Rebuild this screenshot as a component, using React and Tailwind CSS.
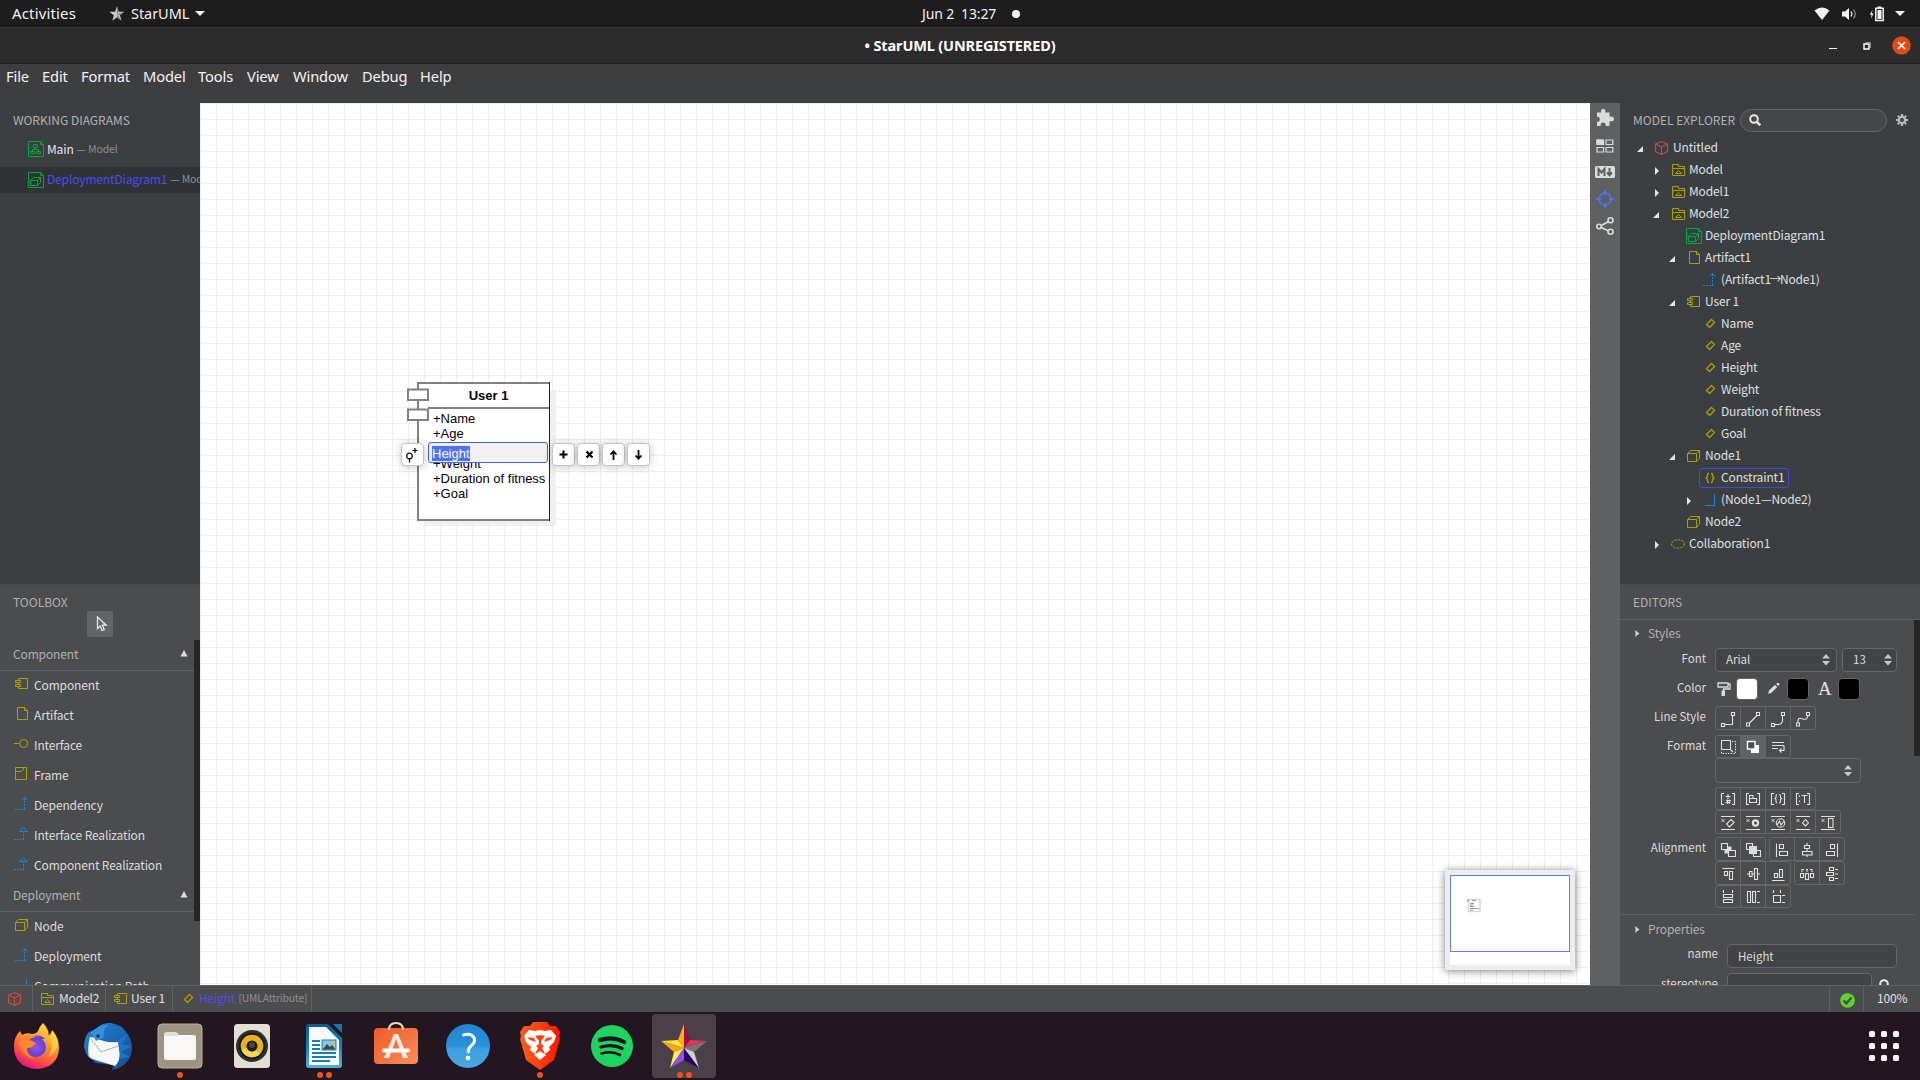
import React from "react";

const Y = "#a9a000";
const G = "#00a53c";
const B = "#1683d8";
const R = "#c94a3e";

const Svg = ({ w = 16, h = 16, children, className = "" }) => (
  <svg width={w} height={h} viewBox={`0 0 ${w} ${h}`} fill="none" className={`block shrink-0 ${className}`}>
    {children}
  </svg>
);

const glyphs = {
  project: (
    <g stroke={R} strokeWidth="1.2" strokeLinejoin="round">
      <path d="M7.5 1.5 L13.5 4 V11.5 L7.5 14.5 L1.5 11.5 V4 Z" />
      <path d="M1.5 4 L7.5 7 L13.5 4 M7.5 7 V14.5" />
    </g>
  ),
  model: (
    <g stroke={Y}>
      <path d="M2.5 6.5 V2.5 H8.5 V4.5 H14.5 V13.5 H2.5 V6.5 H14.5" />
      <path d="M5.5 11.5 L8.5 8.5 L11.5 11.5 Z" />
    </g>
  ),
  classDiagram: (
    <g stroke={G}>
      <path d="M.5 .5 H12.5 L15.5 3.5 V15.5 H.5 Z M12.5 .5 V3.5 H15.5" />
      <path d="M5.5 3.5 H9.5 V6.5 H5.5 Z M7.5 6.5 V9 M4.5 11 V8.5 H10.5 V11 M2.5 10.5 H6.5 V12.5 H2.5 Z M8.5 10.5 H12.5 V12.5 H8.5 Z" />
    </g>
  ),
  deployDiagram: (
    <g stroke={G}>
      <path d="M.5 .5 H12.5 L15.5 3.5 V15.5 H.5 Z M12.5 .5 V3.5 H15.5" />
      <path d="M2.5 8.5 H9.5 V13.5 H2.5 Z M2.5 8.5 L5.5 5.5 H12.5 V10.5 L9.5 13.5 M9.5 8.5 L12.5 5.5" />
    </g>
  ),
  artifact: (
    <g stroke={Y}>
      <path d="M3.5 1.5 H10.5 L13.5 4.5 V13.5 H3.5 Z" />
      <path d="M10.5 1.5 V4.5 H13.5" />
    </g>
  ),
  dependency: (
    <g stroke={B}>
      <path d="M1 13.5 H11.5" strokeDasharray="2 1" />
      <path d="M10.5 13 V2" strokeDasharray="2 1" />
      <path d="M7.5 4.5 L10.5 1.5 L13.5 4.5" />
    </g>
  ),
  realization: (
    <g stroke={B}>
      <path d="M0 13.5 H10.5" strokeDasharray="2 1" />
      <path d="M9.5 13 V6" strokeDasharray="2 1" />
      <path d="M5.5 5.5 L9.5 1.5 L13.5 5.5 Z" />
    </g>
  ),
  component: (
    <g stroke={Y}>
      <path d="M4.5 4.5 V2.5 H13.5 V12.5 H4.5 V10.5 M4.5 6 V9" />
      <path d="M1.5 4.5 H6.5 V6.5 H1.5 Z M1.5 8.5 H6.5 V10.5 H1.5 Z" />
    </g>
  ),
  attribute: <path d="M9.5 3.5 L12.5 6.500 L7.5 11.5 L4.5 8.500 Z" stroke={Y} strokeWidth="1.3" />,
  node: (
    <g stroke={Y}>
      <path d="M1.5 5.5 H10.5 V13.5 H1.5 Z M1.5 5.5 L4.5 2.5 H13.5 V10.5 L10.5 13.5 M10.5 5.5 L13.5 2.5" />
    </g>
  ),
  constraint: (
    <g stroke={Y} strokeWidth="1.3">
      <path d="M7 3.500 H6.5 Q5.500 3.500 5.500 4.500 V6.5 L4 8 L5.500 9.500 V11 Q5.500 12.500 6.5 12.500 H7" />
      <path d="M9 3.500 H9.500 Q10.500 3.500 10.500 4.500 V6.5 L12 8 L10.500 9.500 V11 Q10.500 12.500 9.500 12.500 H9" />
    </g>
  ),
  association: <path d="M3 13.5 H12.5 V2" stroke={B} />,
  collaboration: <ellipse cx="8" cy="8" rx="6.5" ry="4.2" stroke={Y} strokeDasharray="2.5 1" />,
  iface: (
    <g stroke={Y}>
      <path d="M0 7.5 H5.5" />
      <circle cx="9.7" cy="7.5" r="4" />
    </g>
  ),
  frame: (
    <g stroke={Y}>
      <path d="M1.5 1.5 H12.5 V13.5 H1.5 Z M1.5 5.5 H7.5 L9.5 3.5 V1.5" />
    </g>
  ),
};

const Icon = ({ name, className }) => <Svg className={className}>{glyphs[name]}</Svg>;

const Caret = ({ className = "" }) => (
  <Svg w={10} h={5} className={className}>
    <path d="M0 0 H10 L5 5 Z" fill="#f2f2f2" />
  </Svg>
);

function TopBar() {
  return (
    <header className="relative flex h-[27px] shrink-0 items-center justify-between bg-[#1d1d1d] font-['Noto_Sans',sans-serif] text-[15px] leading-none text-[#f2f2f2]">
      <div className="flex items-center pl-3">
        <span className="w-[97px] tracking-[0.15px]">Activities</span>
        <Svg w={16} h={16} className="mr-[6px]">
          <path d="M8 .5 L9.8 5.8 L15.2 5.8 L10.9 9.2 L12.6 14.8 L8 11.3 L3.4 14.8 L4.8 9.2 L.4 5.8 L6 5.8 Z" fill="#c9c9c9" />
          <path d="M8 .5 L9.8 5.8 L8 8.4 Z M15.2 5.8 L10.9 9.2 L8 8.4 Z M12.6 14.8 L8 11.3 V8.4 Z" fill="#7b7b7b" />
        </Svg>
        <span className="w-[64px] text-[14.5px] tracking-[-0.05px]">StarUML</span>
        <Caret />
      </div>
      <div className="absolute left-[922px] flex items-center whitespace-pre text-[14px]">
        <span className="w-[90px]">Jun 2  13:27</span>
        <i className="h-2 w-2 rounded-full bg-[#f2f2f2]" />
      </div>
      <div className="flex items-center pr-[15px]">
        <Svg w={17} h={14} className="mr-[11px]">
          <path d="M.5 3.5 Q8 -2.5 15.5 3.5 L8 13 Z" fill="#f2f2f2" />
        </Svg>
        <Svg w={16} h={14} className="mr-[11px]">
          <path d="M0 4.5 H3 L7 1 V13 L3 9.5 H0 Z" fill="#f2f2f2" />
          <path d="M9 4.5 Q10.8 7 9 9.5" stroke="#f2f2f2" strokeWidth="1.2" />
          <path d="M11.5 2.5 Q15 7 11.5 11.5" stroke="#8d8d8d" strokeWidth="1.2" />
        </Svg>
        <Svg w={16} h={16} className="mr-[10px]">
          <path d="M3.5 4 L.8 8.7 H2.6 L2 12.5 L4.6 7.6 H2.8 Z" fill="#f2f2f2" />
          <path d="M6.8 2.2 H14.2 V14.6 H6.8 Z" stroke="#f2f2f2" strokeWidth="1.5" />
          <path d="M8.5 .5 H12.5 V2 H8.5 Z M8.5 4 H12.5 V13 H8.5 Z" fill="#f2f2f2" />
        </Svg>
        <Caret />
      </div>
    </header>
  );
}

function TitleBar() {
  return (
    <div className="relative flex h-[37px] shrink-0 items-center justify-center border-b border-t border-b-[#202020] border-t-[#373737] bg-[#2c2c2c]">
      <span className="font-['Noto_Sans',sans-serif] text-[14.5px] font-bold leading-none text-white">• StarUML (UNREGISTERED)</span>
      <div className="absolute right-[9px] flex items-center">
        <Svg w={8} h={18} className="mr-[26px]">
          <path d="M0 11.5 H8" stroke="#fff" />
        </Svg>
        <Svg w={9} h={18} className="mr-[20px]">
          <path d="M2.5 5.5 H7.5 V11" stroke="#8e8e8e" />
          <path d="M1 7 H6 V12 H1 Z" stroke="#fff" strokeWidth="1.4" />
        </Svg>
        <Svg w={19} h={19}>
          <circle cx="9.5" cy="9.5" r="9.3" fill="#e24a1a" />
          <path d="M6 6 L13 13 M13 6 L6 13" stroke="#fff" strokeWidth="1.5" />
        </Svg>
      </div>
    </div>
  );
}

const menus = [
  ["File", "w-[36px]"], ["Edit", "w-[39px]"], ["Format", "w-[62px]"], ["Model", "w-[55px]"], ["Tools", "w-[49px]"],
  ["View", "w-[46px]"], ["Window", "w-[69px]"], ["Debug", "w-[58px]"], ["Help", "w-[40px]"],
];

function MenuBar() {
  return (
    <nav className="flex h-[39px] shrink-0 bg-linear-to-b from-[#3e3e3e] from-60% to-[#3b3f41] to-66% pl-[6px] pt-[4px] font-['Noto_Sans',sans-serif] text-[14.7px] text-[#f4f4f4]">
      {menus.map(([m, w]) => (
        <span key={m} className={`${w} h-4 leading-[16px]`}>{m}</span>
      ))}
    </nav>
  );
}

const PanelTitle = ({ children }) => (
  <h2 className="text-[12px] leading-none tracking-normal text-[#aeb0b1]">{children}</h2>
);

function WorkingDiagrams() {
  return (
    <section className="h-[481px] shrink-0 overflow-hidden bg-[#3b3f41]">
      <div className="flex h-[33px] items-center pl-[13px] pt-[1px]"><PanelTitle>WORKING DIAGRAMS</PanelTitle></div>
      <div className="flex h-[26px] items-center whitespace-nowrap pl-[28px]">
        <Icon name="classDiagram" />
        <span className="ml-[3px] text-[#e4e4e4]">Main</span>
        <span className="ml-[3px] text-[10.5px] text-[#8b8d8e]">— Model</span>
      </div>
      <div className="mt-[5px] flex h-[26px] items-center whitespace-nowrap bg-[#2f3335] pl-[28px]">
        <Icon name="deployDiagram" />
        <span className="-mt-[2px] ml-[3px] text-[#4a4df0]">DeploymentDiagram1</span>
        <span className="-mt-px ml-[3px] text-[10.5px] text-[#8b8d8e]">— Model2</span>
      </div>
    </section>
  );
}

const toolGroups = [
  ["Component", [["component", "Component"], ["artifact", "Artifact"], ["iface", "Interface"], ["frame", "Frame"], ["dependency", "Dependency"], ["realization", "Interface Realization"], ["realization", "Component Realization"]]],
  ["Deployment", [["node", "Node"], ["dependency", "Deployment"], ["association", "Communication Path"]]],
];

function Toolbox() {
  return (
    <section className="flex min-h-0 grow flex-col border-t border-[#46494b] bg-[#4b4c4d]">
      <div className="flex h-[26px] shrink-0 items-center pl-[13px] pt-[8px]"><PanelTitle>TOOLBOX</PanelTitle></div>
      <button className="ml-[87px] flex h-[26px] w-[26px] shrink-0 items-center justify-center rounded-[3px] bg-[#626567]">
        <Svg w={12} h={16} className="ml-[3px]">
          <path d="M1.5 1 V12.5 L4.3 10 L6 14.5 L8.2 13.6 L6.5 9.2 H10.2 Z" stroke="#e8e8e8" strokeWidth="1.3" />
        </Svg>
      </button>
      <div className="mt-[3px] flex min-h-0 grow overflow-hidden">
        <div className="w-[194px]">
          {toolGroups.map(([title, items]) => (
            <div key={title}>
              <div className="flex h-[31px] items-center justify-between border-b border-[#5d5f60] pl-[13px] pr-[6px] text-[#aeb0b1]">
                <span className="-mt-[2px]">{title}</span>
                <Svg w={8} h={7} className="mb-[3px]"><path d="M4 0 L7.5 6.500 H.5 Z" fill="#ddd" /></Svg>
              </div>
              {items.map(([icon, label]) => (
                <div key={label} className="flex h-[30px] items-center whitespace-nowrap pl-[14px] text-[#dcdcdc]">
                  <Icon name={icon} className="-mt-[4px]" />
                  <span className="-mt-[2px] ml-1">{label}</span>
                </div>
              ))}
            </div>
          ))}
        </div>
        <div className="h-[281px] w-[6px] bg-[#262626]" />
      </div>
    </section>
  );
}

const QuickButton = ({ children }) => (
  <button className="flex h-[23px] w-[23px] items-center justify-center rounded-[4px] border border-[#c3c3c3] bg-white shadow-[0_1px_10px_rgba(0,0,0,0.22)]">
    {children}
  </button>
);

const Attr = ({ children }) => <div className="h-[15px] whitespace-nowrap leading-[15px]">{children}</div>;

function Canvas() {
  return (
    <main className="relative w-[1390px] shrink-0 overflow-hidden bg-white bg-[linear-gradient(to_right,#eeeeee_1px,transparent_1px),linear-gradient(to_bottom,#eeeeee_1px,transparent_1px)] bg-[size:16px_16px] font-['Liberation_Sans',sans-serif] text-[13px] tracking-normal text-black">
      <div className="absolute left-[207px] top-[279px] h-[145px] w-[150px]">
        <Svg w={150} h={145}>
          <path d="M17 8 H149 V144 H17 Z" fill="#f0f0f0" />
          <path d="M11 1 H142.5 V138 H11 Z" fill="#fff" />
          <path d="M142.5 1 H11 V138 H142.5" stroke="#808080" strokeWidth="2" />
          <path d="M21 26 H143" stroke="#808080" strokeWidth="2" />
          <path d="M142.5 0 V139" stroke="#222" />
          <path d="M1 7.5 H21 V18 H1 Z M1 27.5 H21 V38 H1 Z" fill="#fff" stroke="#808080" strokeWidth="2" />
        </Svg>
        <div className="absolute left-[22px] top-[6px] w-[119px] text-center font-bold leading-[15px]">User 1</div>
        <div className="absolute left-[26px] top-[29px]">
          <Attr>+Name</Attr>
          <Attr>+Age</Attr>
          <Attr />
          <Attr>+Weight</Attr>
          <Attr>+Duration of fitness</Attr>
          <Attr>+Goal</Attr>
        </div>
      </div>
      <div className="absolute left-[228px] top-[339px] flex h-[21px] w-[120px] items-center rounded-[3px] border border-[#3f62f0] bg-[#f1f1f1] pl-[3px] pt-[2px]">
        <span className="h-[15px] bg-[#4d70f5] leading-[15px] text-white">Height</span>
      </div>
      <div className="absolute left-[201px] top-[340px]">
        <QuickButton>
          <Svg w={14} h={16} className="-ml-px">
            <circle cx="4.5" cy="9" r="2.8" stroke="#000" strokeWidth="1.2" />
            <path d="M4.5 12 V15.5 M10 1 V6 M7.5 3.500 H12.500" stroke="#000" strokeWidth="1.2" />
          </Svg>
        </QuickButton>
      </div>
      <div className="absolute left-[352px] top-[340px] flex gap-[2px]">
        <QuickButton><Svg w={9} h={9} className="-ml-px"><path d="M4.5 .5 V8.5 M.5 4.5 H8.5" stroke="#000" strokeWidth="2" /></Svg></QuickButton>
        <QuickButton><Svg w={9} h={9} className="ml-px"><path d="M1.5 1.5 L7.5 7.5 M7.5 1.5 L1.5 7.5" stroke="#000" strokeWidth="2.2" /></Svg></QuickButton>
        <QuickButton><Svg w={9} h={10}><path d="M4.5 1 V10 M1.5 4.5 L4.5 1.3 L7.5 4.5" stroke="#000" strokeWidth="1.8" /></Svg></QuickButton>
        <QuickButton><Svg w={9} h={10}><path d="M4.5 0 V9 M1.5 5.5 L4.5 8.7 L7.5 5.5" stroke="#000" strokeWidth="1.8" /></Svg></QuickButton>
      </div>
      <div className="absolute left-[1245px] top-[767px] h-[100px] w-[130px] bg-[#ededed] p-[5px] shadow-[0_1px_8px_rgba(0,0,0,0.5)]">
        <div className="h-[90px] bg-white">
          <div className="h-[77px] border border-[#5f80f5] pl-[16px] pt-[22px]">
            <Svg w={14} h={15}>
              <path d="M1.5 1.5 H13 V13.5 H1.5 Z" stroke="#d8d8d8" strokeWidth="1.5" />
              <path d="M0 1 H2 V4 H0 Z" fill="#bbb" />
              <path d="M5 2.5 H9 M3 5.5 H7 M3 7 H6 M3 8.5 H7 M3 10.5 H12 M3 12 H6" stroke="#999" />
              <path d="M2 4 H12" stroke="#ddd" strokeWidth=".7" />
            </Svg>
          </div>
        </div>
      </div>
    </main>
  );
}

function SideTools() {
  return (
    <aside className="flex w-[30px] shrink-0 flex-col items-center bg-[#5f6062] pt-[5px]">
      <Svg w={20} h={20}>
        <path d="M2 4.5 H6.2 Q5.3 1 8.2 1 Q11.2 1 10.2 4.5 H14.5 V8.6 Q19 7.8 19 11 Q19 14 14.5 13.2 V18 H10.8 Q10.8 14.6 8.2 14.6 Q5.6 14.6 5.6 18 H2 V13.8 Q4.8 13.8 4.8 11.2 Q4.8 8.8 2 8.8 Z" fill="#dadbdb" />
      </Svg>
      <Svg w={18} h={14} className="mt-[11px]">
        <path d="M.5 .5 H8 V6 H.5 Z" fill="#dadbdb" />
        <path d="M1 1 H7.5 V5.5 H1 Z M10 1 H16.8 V5.5 H10 Z M1 8.5 H7.5 V13 H1 Z M10 8.5 H16.8 V13 H10 Z" stroke="#dadbdb" strokeWidth="1.2" />
      </Svg>
      <Svg w={20} h={12} className="mt-[13px]">
        <path d="M1.5 0 H18.5 Q20 0 20 1.5 V10.5 Q20 12 18.5 12 H1.5 Q0 12 0 10.5 V1.5 Q0 0 1.5 0 Z" fill="#dadbdb" />
        <path d="M3.5 10 V3 L6.5 6.5 L9.5 3 V10 M14.5 2 V9 M12 6.5 L14.5 9.2 L17 6.5" stroke="#5f6062" strokeWidth="2" />
      </Svg>
      <Svg w={18} h={18} className="mt-[12px]">
        <circle cx="9" cy="9" r="6" stroke="#4d70f5" strokeWidth="1.7" />
        <path d="M9 0 V5 M9 13 V18 M0 9 H5 M13 9 H18" stroke="#4d70f5" strokeWidth="2" />
      </Svg>
      <Svg w={18} h={18} className="mt-[9px]">
        <path d="M3.5 9.5 L14.5 3.5 M3.5 9.5 L14.5 15" stroke="#dadbdb" strokeWidth="1.6" />
        <g fill="#5f6062" stroke="#dadbdb" strokeWidth="1.6">
          <circle cx="3" cy="9.5" r="2.2" /><circle cx="14.5" cy="3.3" r="2.5" /><circle cx="14.5" cy="14.7" r="2.5" />
        </g>
      </Svg>
    </aside>
  );
}

const tree = [
  [0, "open", "project", "Untitled"],
  [1, "shut", "model", "Model"],
  [1, "shut", "model", "Model1"],
  [1, "open", "model", "Model2"],
  [2, "", "deployDiagram", "DeploymentDiagram1"],
  [2, "open", "artifact", "Artifact1"],
  [3, "", "dependency", <>(Artifact1<span className="-mx-[1.5px]">→</span>Node1)</>],
  [2, "open", "component", "User 1"],
  [3, "", "attribute", "Name"],
  [3, "", "attribute", "Age"],
  [3, "", "attribute", "Height"],
  [3, "", "attribute", "Weight"],
  [3, "", "attribute", "Duration of fitness"],
  [3, "", "attribute", "Goal"],
  [2, "open", "node", "Node1"],
  [3, "", "constraint", "Constraint1"],
  [3, "shut", "association", "(Node1—Node2)"],
  [2, "", "node", "Node2"],
  [1, "shut", "collaboration", "Collaboration1"],
];
const indents = ["pl-[16px]", "pl-[32px]", "pl-[48px]", "pl-[64px]"];

const Magnifier = () => (
  <Svg w={12} h={12}>
    <circle cx="5" cy="5" r="3.8" stroke="#e6e6e6" strokeWidth="2" />
    <path d="M7.8 7.8 L11.3 11.3" stroke="#e6e6e6" strokeWidth="2.4" />
  </Svg>
);

function ModelExplorer() {
  return (
    <section className="h-[481px] shrink-0 overflow-hidden bg-[#3b3f41]">
      <div className="flex h-[34px] items-center pl-[13px]">
        <div className="w-[107px]"><PanelTitle>MODEL EXPLORER</PanelTitle></div>
        <div className="flex h-[23px] w-[147px] items-center rounded-full border border-[#64676a] bg-[#454647] pl-[8px]"><Magnifier /></div>
        <Svg w={12} h={12} className="ml-[9px]">
          <circle cx="6" cy="6" r="3.2" stroke="#b5b7b8" strokeWidth="2.4" />
          <path d="M6 0 V2 M0 6 H2 M1.8 1.8 L3 3 M10.2 1.8 L9 3 M6 12 V10 M12 6 H10 M10.2 10.2 L9 9 M1.8 10.2 L3 9" stroke="#b5b7b8" strokeWidth="2.2" />
        </Svg>
      </div>
      {tree.map(([lvl, arrow, icon, label], i) => (
        <div key={i} className={`flex h-[22px] items-center whitespace-nowrap text-[#dfe0e0] ${indents[lvl]}`}>
          <Svg w={8} h={8} className="mr-[7px] mt-px">
            {arrow === "open" && <path d="M7 1 V7 H1 Z" fill="#e3e4e4" />}
            {arrow === "shut" && <path d="M3 0 L7 4 L3 8 Z" fill="#e3e4e4" />}
          </Svg>
          <div className={`flex h-5 items-center rounded-[3px] border pl-[2px] pr-[4px] ${icon === "constraint" ? "border-[#3f49dd]" : "border-transparent"}`}>
            <Icon name={icon} />
            <span className="-mt-[2px] ml-[3px]">{label}</span>
          </div>
        </div>
      ))}
    </section>
  );
}

const cellIcons = {
  rect: <path d="M1.5 12.5 H4.5 V15.5 H1.5 Z M4.5 13.5 H12.5 V5 M11.5 1.5 H14.5 V4.5 H11.5 Z" />,
  oblique: <path d="M1.5 12 H4.5 V15 H1.5 Z M4.5 12 L12 4.5 M11.5 1.5 H14.5 V4.5 H11.5 Z" />,
  rounded: <path d="M1.5 12.5 H4.5 V15.5 H1.5 Z M4.5 13.5 H8 Q12.5 13.5 12.5 9 V5 M11.5 1.5 H14.5 V4.5 H11.5 Z" />,
  curve: <path d="M1.5 12 H4.5 V15 H1.5 Z M3 12 Q2.5 6 6 7.5 Q12.5 10 13 4.5 M11.5 1.5 H14.5 V4.5 H11.5 Z" />,
  resize: <><path d="M1.5 1.5 H10.5 V10.5 H1.5 Z" /><path d="M12 2.5 H15.5 V14.5 H1.5 V12" strokeDasharray="1.5 1.2" /><path d="M10.5 10.5 L13 13" /></>,
  shadow: <><path d="M6 6 H14 V14 H6 Z" fill="#fff" stroke="none" /><path d="M2.5 2.5 H10 V10 H2.5 Z" fill="#4b4c4d" stroke="#fff" strokeWidth="1.4" /></>,
  wrap: <path d="M2 3.5 H14 M2 6.5 H14 M2 9.5 H8 M14 6.5 V11.5 H9.5 M11.5 9.5 L9.5 11.5 L11.5 13.5" />,
  vis: <><Brackets /><path d="M8 3 V8 M5.5 5.5 H10.5 M6 9.5 H11 M5.5 11.5 H10.5 M7.3 8.5 V13 M9.3 8.5 V13" /></>,
  ns: <><Brackets /><path d="M4.5 11.5 V4.5 H8 V7.5 H11.5 V11.5 Z M4.5 7.5 H8" /></>,
  prop: <><Brackets /><path d="M7 3.5 Q6 3.5 6 5 V6.5 L5 7.5 L6 8.5 V10 Q6 12 7 12 M9 3.5 Q10.5 3.5 10.5 5 V6.5 L11.5 7.5 L10.5 8.5 V10 Q10.5 12 9 12" /></>,
  type: <><Brackets /><path d="M4.5 4.5 V6 M4.5 9.5 V11 M6.5 4.5 H12.5 M9.5 4.5 V12" /></>,
  supAttr: <><Suppress /><path d="M11 4.5 L14 7.5 L9.5 12 L6.5 9 Z" /></>,
  supOp: <><Suppress /><circle cx="10.5" cy="8" r="2.6" strokeWidth="2.2" /></>,
  supRec: <><Suppress /><circle cx="10.5" cy="8" r="4.2" /><path d="M7 10 L9.5 6 L11 10 L14 6" /></>,
  supLit: <><Suppress /><path d="M10.5 4.5 L13.5 8 L10.5 11 L7.5 8 Z" /></>,
  supCol: <><Suppress /><path d="M8.5 3.5 H13 V12.5 H8.5 Z" /></>,
  front: <><path d="M4.5 4.5 H11.5 V11.5 H4.5 Z" fill="#dadbdb" stroke="none" /><path d="M1.5 1.5 H7.5 V7.5 H1.5 Z M8.5 8.5 H15.5 V14.5 H8.5 Z" fill="#4b4c4d" /></>,
  back: <><path d="M1.5 1.5 H7.5 V7.5 H1.5 Z M8.5 8.5 H15.5 V14.5 H8.5 Z" /><path d="M4 4 H12 V12 H4 Z" fill="#dadbdb" stroke="none" /></>,
  left: <path d="M2.5 1.5 V15 M5.5 2.5 H9.5 V6.5 H5.5 Z M5.5 9.5 H13.5 V13.5 H5.5 Z" />,
  center: <path d="M5.5 3.5 H10.5 V6.5 H5.5 Z M3.5 9.5 H13 V13 H3.5 Z M8 1 V3 M8 7 V9 M8 13 V15" />,
  right: <path d="M13.5 1.5 V15 M6.5 2.5 H10.5 V6.5 H6.5 Z M2.5 9.5 H10.5 V13.5 H2.5 Z" />,
  top: <path d="M2.5 2.5 H14.5 M4.5 5.5 H7.5 V9.5 H4.5 Z M9.5 5.5 H12.5 V13.5 H9.5 Z" />,
  middle: <path d="M4.5 5.5 H7 V10.5 H4.5 Z M9.5 2.5 H12.5 V13.5 H9.5 Z M2 8 H4 M7 8 H9.5 M13 8 H15" />,
  bottom: <path d="M2 14.5 H14.5 M4.5 7.5 H7.5 V11.5 H4.5 Z M9.5 3.5 H12.5 V11.5 H9.5 Z" />,
  distH: <path d="M1.5 7.5 H4.5 V11.5 H1.5 Z M6.5 7.5 H9.5 V13.5 H6.5 Z M11.5 7.5 H14.5 V11.5 H11.5 Z M3 3.5 H5 M7 3.5 H9 M11 3.5 H13 M3 6 V3 M8 6 V3 M13 6 V3" />,
  distV: <path d="M5.5 1.5 H9.5 V4.5 H5.5 Z M2.5 6.5 H9.5 V9.5 H2.5 Z M5.5 11.5 H9.5 V14.5 H5.5 Z M11 3.5 H14 M11 8 H14 M11 12.5 H14" />,
  sameW: <path d="M3.5 5.5 H12.5 V8.5 H3.5 Z M3.5 10.5 H12.5 V13.5 H3.5 Z M3.5 1 V4 M12.5 1 V4" />,
  sameH: <path d="M2.5 2.5 H5.5 V13.5 H2.5 Z M7.5 2.5 H10.5 V13.5 H7.5 Z M12 2.5 H15 M12 13.5 H15" />,
  sameS: <path d="M3.5 6.5 H10.5 V13.5 H3.5 Z M3.5 1 V4 M10.5 1 V4 M12 6.5 H15 M12 13.5 H15" />,
};

function Brackets() {
  return <path d="M4 2.5 H1.5 V13.5 H4 M12 2.5 H14.5 V13.5 H12" />;
}
function Suppress() {
  return <><path d="M1 1.5 H15 M1 14.5 H15" /><path d="M1.5 4 L4.5 7 M4.5 4 L1.5 7" strokeWidth=".9" /></>;
}

const Cells = ({ icons, active, className = "h-[24px]" }) => (
  <div className={`flex overflow-hidden rounded-[3px] border border-[#636567] ${className}`}>
    {icons.map((n, i) => (
      <span key={n} className={`flex items-center justify-center ${i ? "w-[25px] border-l border-[#636567]" : "w-[24px]"} ${n === active ? "bg-[#5f6466]" : ""}`}>
        <Svg className="mt-px"><g stroke="#e0e0e0" strokeWidth="1.1">{cellIcons[n]}</g></Svg>
      </span>
    ))}
  </div>
);

const Spin = () => (
  <Svg w={8} h={12}><path d="M4 0 L8 4.6 H0 Z M4 11.5 L8 7 H0 Z" fill="#c6c7c8" /></Svg>
);

const Label = ({ children, className = "w-[86px]" }) => (
  <span className={`shrink-0 text-right ${className}`}>{children}</span>
);

const Section = ({ children }) => (
  <div className="flex items-center pl-[15px] text-[#aeb0b1]">
    <Svg w={5} h={7} className="mr-2 mt-px"><path d="M.3 0 L4.5 3.500 L.3 7 Z" fill="#c9caca" /></Svg>
    {children}
  </div>
);

function Editors() {
  return (
    <section className="flex min-h-0 grow flex-col border-t border-[#46494b] bg-[#4b4c4d]">
      <div className="flex h-[35px] shrink-0 items-center border-b border-[#5d5f60] pl-[13px]"><PanelTitle>EDITORS</PanelTitle></div>
      <div className="flex min-h-0 grow overflow-hidden text-[11.5px] tracking-normal text-[#dcdcdc]">
        <div className="w-[294px] shrink-0">
          <div className="h-[295px] border-b border-[#5d5f60]">
            <div className="flex h-[27px] items-center pb-[2px] text-[12px] tracking-[-0.14px]"><Section>Styles</Section></div>
            <div className="flex h-[24px] items-center">
              <Label>Font</Label>
              <div className="ml-[9px] mt-px flex h-[24px] w-[122px] items-center justify-between rounded-[4px] border border-[#636567] bg-[#424344] pl-[10px] pr-[6px]">Arial<Spin /></div>
              <div className="ml-[5px] mt-px flex h-[24px] w-[55px] items-center justify-between rounded-[4px] border border-[#636567] bg-[#424344] pl-[10px] pr-[4px]">13<Spin /></div>
            </div>
            <div className="mt-[5px] flex h-[24px] items-center">
              <Label>Color</Label>
              <Svg w={14} h={15} className="ml-[11px]">
                <path d="M1 2 H11 V6 H1 Z M11 3 H13 V8 H6.5 V10" stroke="#dadbdb" strokeWidth="1.3" />
                <path d="M4.5 9.5 H8 V15 H4.5 Z" fill="#dadbdb" />
              </Svg>
              <i className="ml-[5px] mt-px h-[22px] w-[22px] rounded-[4px] border border-[#636567] bg-white" />
              <Svg w={12} h={12} className="ml-[10px]">
                <path d="M0 12 L1.2 8.2 L7 2.8 L9.2 5 L3.5 10.8 Z M8 2 L9.8 .4 L11.8 2.2 L10.2 4.1 Z" fill="#dadbdb" />
              </Svg>
              <i className="ml-[7px] mt-px h-[22px] w-[22px] rounded-[4px] border border-[#636567] bg-black" />
              <span className="ml-[9px] mt-px w-[14px] font-['Liberation_Serif',serif] text-[19px] leading-none text-[#e4e4e4]">A</span>
              <i className="ml-[6px] mt-px h-[22px] w-[22px] rounded-[4px] border border-[#636567] bg-black" />
            </div>
            <div className="mt-[5px] flex h-[24px] items-center">
              <Label>Line Style</Label>
              <div className="ml-[9px] mt-[2px]"><Cells icons={["rect", "oblique", "rounded", "curve"]} /></div>
            </div>
            <div className="mt-[5px] flex h-[23px] items-center">
              <Label>Format</Label>
              <div className="ml-[9px] mt-px"><Cells className="h-[23px]" icons={["resize", "shadow", "wrap"]} active="shadow" /></div>
            </div>
            <div className="ml-[95px] mt-px flex h-[25px] w-[146px] items-center justify-end rounded-[4px] border border-[#636567] pr-[8px]"><Spin /></div>
            <div className="ml-[95px] mt-1 flex"><Cells className="h-[23px]" icons={["vis", "ns", "prop", "type"]} /></div>
            <div className="ml-[95px] flex"><Cells icons={["supAttr", "supOp", "supRec", "supLit", "supCol"]} /></div>
            <div className="mt-[3px] flex h-6 items-center">
              <Label className="mb-[2px] w-[86px]">Alignment</Label>
              <div className="ml-[9px] flex gap-[3px]"><Cells icons={["front", "back"]} /><Cells icons={["left", "center", "right"]} /></div>
            </div>
            <div className="ml-[95px] flex gap-[3px]"><Cells icons={["top", "middle", "bottom"]} /><Cells icons={["distH", "distV"]} /></div>
            <div className="ml-[95px] flex"><Cells className="h-[23px]" icons={["sameW", "sameH", "sameS"]} /></div>
          </div>
          <div className="flex h-[29px] items-center pb-px text-[12px] tracking-[-0.14px]"><Section>Properties</Section></div>
          <div className="flex h-[24px] items-center">
            <Label className="mb-1 w-[98px]">name</Label>
            <div className="ml-[9px] flex h-[24px] w-[170px] items-center rounded-[4px] border border-[#636567] bg-[#424344] pl-[10px] pt-px">Height</div>
          </div>
          <div className="mt-[5px] flex h-[24px] items-center">
            <Label className="mb-[3px] w-[98px]">stereotype</Label>
            <div className="ml-[9px] mr-[7px] h-[24px] w-[145px] rounded-[4px] border border-[#636567] bg-[#424344]" />
            <Magnifier />
          </div>
        </div>
        <div className="h-[136px] w-[6px] bg-[#262626]" />
      </div>
    </section>
  );
}

function StatusBar() {
  return (
    <footer className="flex h-[27px] shrink-0 items-stretch border-t border-[#5d5f60] bg-[#4b4c4d] text-[#e0e0e0] [&>div]:flex [&>div]:items-center [&>div]:border-[#5d5f60]">
      <div className="w-[33px] border-r pl-[7px]"><Icon name="project" /></div>
      <div className="w-[73px] border-r pl-[6px]"><Icon name="model" className="mr-[4px]" /><span className="-mt-[2px]">Model2</span></div>
      <div className="w-[67px] border-r pl-[7px]"><Icon name="component" className="mr-[2px]" /><span className="-mt-[2px]">User 1</span></div>
      <div className="w-[139px] border-r pl-[7px]">
        <Icon name="attribute" className="mr-[3px]" />
        <span className="-mt-[2px] text-[#4a4df0]">Height</span>
        <span className="-mt-px ml-[3px] text-[10.3px] text-[#8f9192]">[UMLAttribute]</span>
      </div>
      <div className="ml-auto w-[34px] justify-center border-l">
        <Svg w={15} h={15} className="ml-px mt-[3px]">
          <circle cx="7.5" cy="7.5" r="7.3" fill="#5fd62a" />
          <path d="M3.5 7.5 L6.3 10.5 L11.5 4.5" stroke="#4b4c4d" strokeWidth="2.4" />
        </Svg>
      </div>
      <div className="w-[57px] border-l pl-[13px]"><span className="-mt-[2px]">100%</span></div>
    </footer>
  );
}

const dockApps = {
  firefox: (
    <>
      <defs>
        <linearGradient id="fx" x1=".8" y1="0" x2=".3" y2="1"><stop offset="0" stopColor="#ffe94a" /><stop offset=".4" stopColor="#ff9a2e" /><stop offset=".75" stopColor="#ff4a45" /><stop offset="1" stopColor="#e0108a" /></linearGradient>
        <radialGradient id="fxg"><stop offset="0" stopColor="#9a4ff0" /><stop offset="1" stopColor="#5b45c8" /></radialGradient>
      </defs>
      <path d="M31 1 Q36 6 37 14 Q41 11 40 8 Q47 16 47 26 Q46 46 24 47 Q2 45 2 24 Q2 15 8 9 L10 13 Q14 10 20 12 Q24 12 26 9 Q28 4 31 1 Z" fill="url(#fx)" />
      <path d="M30 2 Q37 8 38 16 Q43 26 36 35 Q45 30 46 22 Q46 15 40 8 L38 13 Q35 5 30 2 Z" fill="#ffd83c" opacity=".8" />
      <circle cx="24" cy="25" r="10" fill="url(#fxg)" />
      <path d="M7 20 Q15 15 24 21 Q21 26 15 26 Q14 33 23 37 Q10 36 7 20 Z" fill="#ff8a2c" />
      <path d="M22 14 Q29 12 33 17 L26 17 Z" fill="#7b3ce6" />
    </>
  ),
  thunderbird: (
    <>
      <defs><linearGradient id="tb" x1="0" y1="0" x2="1" y2="1"><stop offset="0" stopColor="#1f86d8" /><stop offset="1" stopColor="#174a92" /></linearGradient></defs>
      <path d="M12 7 Q18 0 27 1 Q38 3 43 11 Q50 21 47 33 Q43 45 28 48 L30 43 L12 41 Q2 36 0 25 Q0 15 5 10 Z" fill="url(#tb)" />
      <path d="M6 15 Q3 25 5 36 L31 44 Q35 40 36 34 L34 20 Q20 21 12 16 Z" fill="#f8f8fa" />
      <path d="M34 18 L44 12 L38 22 L47 24 L37 30 L46 35 L35 37 L36 30 Z" fill="#1f74c8" />
      <path d="M7 17 L17 30 L34 24" stroke="#aaa" fill="none" strokeWidth="1" />
      <path d="M6 12 Q14 2 24 3 Q18 9 20 15 L12 19 Q9 13 6 12 Z" fill="#2e93e0" />
      <circle cx="14" cy="14" r="1.8" fill="#3a3030" />
      <path d="M4 34 Q7 42 13 43 L9 38 Z" fill="#2a1468" />
    </>
  ),
  files: (
    <>
      <rect x="2" y="2" width="44" height="44" rx="4" fill="#9c9582" stroke="#b7b09e" />
      <path d="M8 13 Q8 10 11 10 H19 Q21 10 22 12 L24 14 H36 V20 H8 Z" fill="#e3dfd5" />
      <rect x="8" y="14" width="32" height="24" rx="2.5" fill="#f9f8f7" />
      <path d="M8 15.5 H20 L23 13 H38 Q40 13 40 16 V25 H8 Z" fill="#f9f8f7" />
    </>
  ),
  rhythmbox: (
    <>
      <rect x="6" y="2" width="36" height="44" rx="3.5" fill="#e4dfd3" />
      <circle cx="24" cy="24" r="16" fill="#2c2f36" />
      <circle cx="24" cy="24" r="13" fill="#14161a" />
      <circle cx="24" cy="24" r="11.3" fill="#e6b51e" />
      <path d="M24 24 L13.5 28 A11.3 11.3 0 0 0 32 32 Z" fill="#f7d658" />
      <circle cx="24" cy="24" r="5.5" fill="#1b1b1d" />
      <circle cx="24" cy="23" r="3" fill="#444" />
    </>
  ),
  writer: (
    <>
      <defs><linearGradient id="wr" x1="0" y1="0" x2="0" y2="1"><stop offset="0" stopColor="#0b5c8c" /><stop offset=".5" stopColor="#1780b8" /><stop offset="1" stopColor="#4fb4e2" /></linearGradient></defs>
      <path d="M9 2 H28 L42 16 V43 Q42 46 39 46 H9 Q6 46 6 43 V5 Q6 2 9 2 Z" fill="url(#wr)" />
      <path d="M33 2 H42 V11 Z" fill="#1479ae" />
      <path d="M9 5 H26 L39 18 V43 H9 Z" fill="#f8fafb" />
      <path d="M12 19 H20 M12 23 H20 M12 27 H20 M12 31 H36 M12 35 H36 M12 39 H30" stroke="#1a7ab2" strokeWidth="2" />
      <rect x="22" y="18" width="14" height="10" fill="#8cc4e6" stroke="#1a7ab2" />
      <path d="M22.5 27.5 L27 22 L30 25 L32 23 L35.5 27.5 Z" fill="#444" />
      <circle cx="33.5" cy="20.5" r="1.5" fill="#f3b53a" />
    </>
  ),
  software: (
    <>
      <defs><linearGradient id="sw" x1="0" y1="0" x2="1" y2="1"><stop offset="0" stopColor="#f05a24" /><stop offset="1" stopColor="#f68e5c" /></linearGradient></defs>
      <rect x="2" y="6" width="44" height="36" rx="4" fill="url(#sw)" />
      <path d="M17 8 Q17 1 24 1 Q31 1 31 8" stroke="#f1dcb0" strokeWidth="2" fill="none" />
      <path d="M22 12 H26 L36 36 H31 L24 17 L17 36 H12 Z" fill="#fbe9e0" />
      <path d="M12 28.5 H36" stroke="#fff" strokeWidth="4" strokeLinecap="round" />
    </>
  ),
  help: (
    <>
      <defs><linearGradient id="hp" x1="0" y1="0" x2="0" y2="1"><stop offset="0" stopColor="#1f86d8" /><stop offset=".5" stopColor="#2b90da" /><stop offset=".55" stopColor="#3c9edf" /><stop offset="1" stopColor="#4aa8e4" /></linearGradient></defs>
      <circle cx="24" cy="24" r="22" fill="url(#hp)" />
      <path d="M18.5 13.500 Q24 11 28 13.500 Q33 17.500 28.500 22.500 Q24 26 24.200 31" stroke="#fff" strokeWidth="3" fill="none" />
      <circle cx="24" cy="36" r="2.3" fill="#fff" />
    </>
  ),
  brave: (
    <>
      <defs><linearGradient id="br" x1="0" x2="1"><stop offset="0" stopColor="#ff5a1f" /><stop offset=".5" stopColor="#ff4010" /><stop offset="1" stopColor="#ff1500" /></linearGradient></defs>
      <path d="M17 0 H31 L34 4 L40 4 L44 10 L43 14 L44 17 L38 38 L24 48 L10 38 L4 17 L5 14 L4 10 L8 4 L14 4 Z" fill="url(#br)" />
      <path d="M13 8 L19 9 L24 8 L29 9 L35 8 L40 14 L38 20 L33 25 L34 28 L29 32 L26 26 L28 24 L25 22 L25 19 L29 14 L24 13 L19 14 L23 19 L23 22 L20 24 L22 26 L19 32 L14 28 L15 25 L10 20 L8 14 Z" fill="#fff" />
      <path d="M11 15 L18 16 L20 20 L14 18 Z M37 15 L30 16 L28 20 L34 18 Z" fill="#ff4510" />
      <path d="M24 29 L30 33 L24 38 L18 33 Z" fill="#fff" />
    </>
  ),
  spotify: (
    <>
      <circle cx="24" cy="24" r="21" fill="#1ed45e" />
      <path d="M12 18 Q25 14 36 20" stroke="#17131a" strokeWidth="4.2" strokeLinecap="round" fill="none" />
      <path d="M13 25 Q25 21.500 34 26.500" stroke="#17131a" strokeWidth="3.3" strokeLinecap="round" fill="none" />
      <path d="M13.5 31.5 Q24 28.500 32 33" stroke="#17131a" strokeWidth="2.6" strokeLinecap="round" fill="none" />
    </>
  ),
  staruml: (
    <>
      <path d="M24 2 L18 18 L24 26 Z" fill="#f9b208" />
      <path d="M24 2 L30 18 L24 26 Z" fill="#961039" />
      <path d="M1 19 L18 18 L24 26 Z" fill="#ffe23e" />
      <path d="M1 19 L14 30 L24 26 Z" fill="#f3a712" />
      <path d="M47 19 L30 18 L24 26 Z" fill="#e8305e" />
      <path d="M47 19 L34 30 L24 26 Z" fill="#767676" />
      <path d="M10 46 L14 30 L24 26 Z" fill="#ffe85a" />
      <path d="M10 46 L24 38 V26 Z" fill="#8d52e6" />
      <path d="M39 46 L24 38 V26 Z" fill="#260062" />
      <path d="M39 46 L34 30 L24 26 Z" fill="#cfcfcf" />
    </>
  ),
};
const dock = [["firefox", 0], ["thunderbird", 0], ["files", 1], ["rhythmbox", 0], ["writer", 2], ["software", 0], ["help", 0], ["brave", 1], ["spotify", 0], ["staruml", 2]];

function Dock() {
  return (
    <footer className="flex h-[68px] shrink-0 bg-[#241620]">
      {dock.map(([n, dots]) => (
        <div key={n} className="flex w-[72px] justify-center pt-[2px]">
          <div className={`relative flex h-[64px] w-[64px] justify-center rounded-[4px] pt-[8px] ${n === "staruml" ? "bg-[#4b3f48]" : ""}`}>
            <Svg w={48} h={48}>{dockApps[n]}</Svg>
            <div className="absolute bottom-0 flex gap-[3px]">
              {Array.from({ length: dots }, (_, i) => <i key={i} className="h-[6px] w-[6px] rounded-full bg-[#e95420]" />)}
            </div>
          </div>
        </div>
      ))}
      <div className="ml-auto mr-[21px] grid grid-cols-3 content-center gap-[6px]">
        {Array.from({ length: 9 }, (_, i) => <i key={i} className="h-[6px] w-[6px] rounded-[1.5px] bg-[#f5f5f5]" />)}
      </div>
    </footer>
  );
}

export default function App() {
  return (
    <div className="flex h-[1080px] w-[1920px] flex-col overflow-hidden bg-[#3b3f41] font-['Noto_Sans_CJK_SC',sans-serif] text-[12px] leading-none tracking-[-0.14px]">
      <TopBar />
      <TitleBar />
      <MenuBar />
      <div className="flex h-[882px] shrink-0">
        <div className="flex w-[200px] shrink-0 flex-col overflow-hidden">
          <WorkingDiagrams />
          <Toolbox />
        </div>
        <Canvas />
        <SideTools />
        <div className="flex w-[300px] shrink-0 flex-col overflow-hidden">
          <ModelExplorer />
          <Editors />
        </div>
      </div>
      <StatusBar />
      <Dock />
    </div>
  );
}
